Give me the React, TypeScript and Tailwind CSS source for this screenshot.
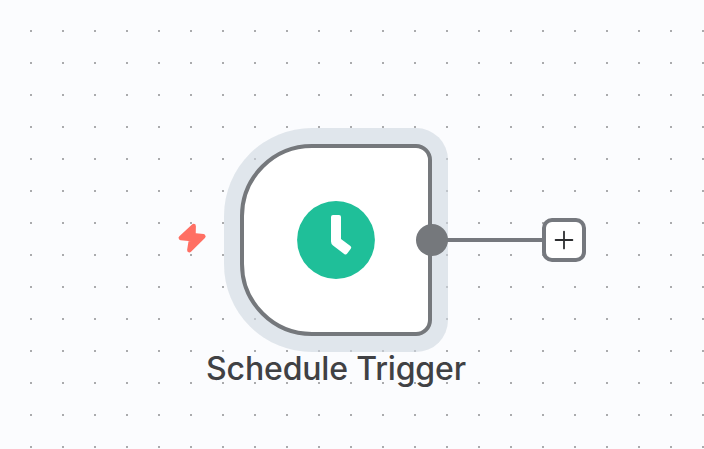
function TriggerBolt() {
  return (
    <svg
      className="absolute left-[176px] top-[220px]"
      width="32"
      height="36"
      viewBox="0 0 32 36"
      fill="#ff6f63"
      stroke="#ff6f63"
      strokeWidth="4.6"
      strokeLinejoin="round"
    >
      <path d="M17.6 6.1 4.9 18 15.2 19 13.4 30.2 27.3 16.4 17.4 15.4Z" />
    </svg>
  );
}

function ClockIcon() {
  return (
    <svg width="78" height="78" viewBox="0 0 78 78">
      <circle cx="39" cy="39" r="38.9" fill="#1fbf99" />
      <path
        fill="#fff"
        d="M36 14H42Q44 14 44 16V38L53.4 45Q55 46.2 53.8 47.8L50.2 52.6Q48.9 54.3 47.2 53L36 44.5Q34 42.8 34 40.4V16Q34 14 36 14Z"
      />
    </svg>
  );
}

function AddButton() {
  return (
    <button className="absolute left-[542px] top-[218px] flex size-11 items-center justify-center rounded-[10px] border-4 border-[#75787e] bg-white">
      <svg width="20" height="20" viewBox="0 0 20 20" stroke="#2d2e30" strokeWidth="1.8" strokeLinecap="round">
        <path d="M10 1.6V18.4M1.6 10H18.4" />
      </svg>
    </button>
  );
}

export default function App() {
  return (
    <main className="relative h-[449px] w-[704px] overflow-hidden bg-[#fbfcfe] font-['Inter',sans-serif]">
      <svg className="absolute inset-0" width="704" height="449">
        <defs>
          <pattern id="dots" width="32" height="32" patternUnits="userSpaceOnUse">
            <rect x="30" y="30" width="2" height="2" fill="#aaabad" />
          </pattern>
        </defs>
        <rect width="704" height="449" fill="url(#dots)" />
      </svg>

      <TriggerBolt />

      <div className="absolute left-[240px] top-[144px] flex size-48 items-center justify-center rounded-l-[72px] rounded-r-2xl border-4 border-[#75787c] bg-white shadow-[0_0_0_16px_rgba(207,215,224,0.6)]">
        <ClockIcon />
      </div>

      <div className="absolute left-[440px] top-[238px] h-1 w-[104px] bg-[#75787e]" />
      <div className="absolute left-[416px] top-[224px] size-8 rounded-full bg-[#75787c]" />
      <AddButton />

      <div className="absolute left-[186px] top-[348px] w-[300px] whitespace-nowrap text-center text-[32px] font-medium leading-[42px] tracking-[-0.16px] text-[#404144]">
        Schedule Trigger
      </div>
    </main>
  );
}
